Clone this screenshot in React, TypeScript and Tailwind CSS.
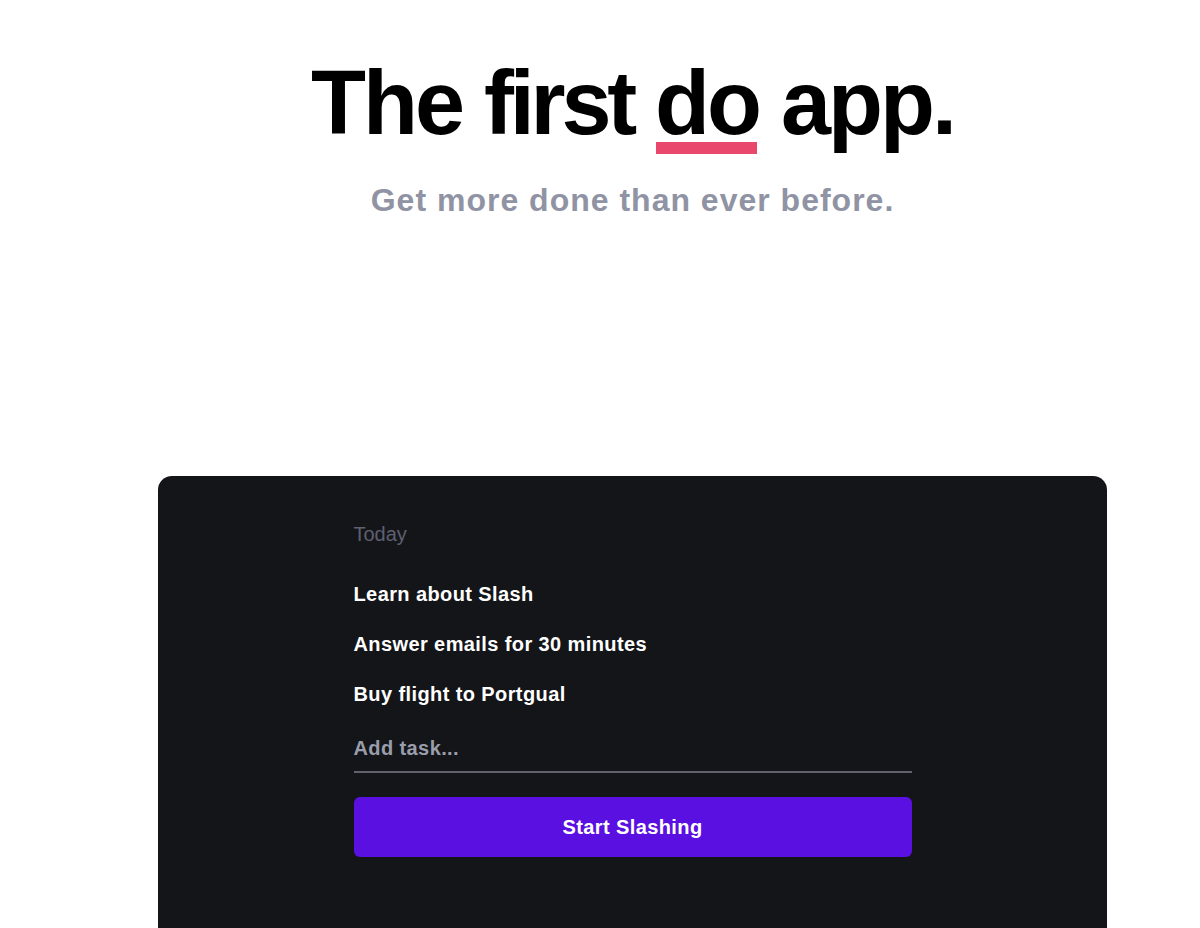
import React from "react";

export default function App() {
  const tasks = ["Learn about Slash", "Answer emails for 30 minutes", "Buy flight to Portgual"];
  return (
    <div className="min-h-screen bg-white overflow-hidden" style={{ fontFamily: '"Liberation Sans", Arial, sans-serif' }}>
      <div className="ml-[158px] w-[949px] flex flex-col items-center">
        <h1 className="mt-[58px] text-[90px] leading-none font-bold tracking-[-3px] text-black whitespace-nowrap">
          The <span className="tracking-[-4.2px]">first</span>{" "}
          <span className="relative inline-block leading-none">
            do
            <span className="absolute left-[1px] right-[2px] bottom-[-6px] h-[12px] bg-[#e9476c]" />
          </span>{" "}
          app.
        </h1>
        <p className="mt-[36px] text-[32px] leading-none font-bold tracking-[1px] text-[#8f93a3] whitespace-nowrap">
          Get more done than ever before.
        </p>
        <div className="mt-[260px] w-full h-[520px] rounded-[14px] bg-[#141519]">
          <div className="w-[558px] mx-auto pt-[44px] flex flex-col">
            <div className="text-[20px] leading-[28px] text-[#5e6070]">Today</div>
            <div className="mt-[21px] flex flex-col">
              {tasks.map((t) => (
                <div key={t} className="text-[20px] leading-[50px] font-bold tracking-[0.4px] text-white">
                  {t}
                </div>
              ))}
            </div>
            <div className="mt-[15px] pb-[9px] border-b-2 border-[#5f616c] text-[20px] leading-[28px] font-bold tracking-[0.4px] text-[#9a9eab]">
              Add task...
            </div>
            <button className="mt-[24px] h-[60px] w-full rounded-md bg-[#5a10e0] text-[20px] font-bold tracking-[0.4px] text-white">
              Start Slashing
            </button>
          </div>
        </div>
      </div>
    </div>
  );
}
